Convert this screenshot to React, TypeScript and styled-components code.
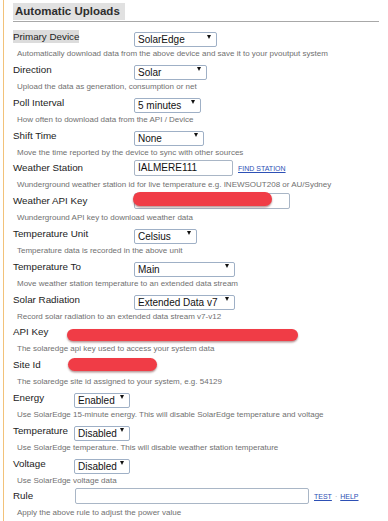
import React from "react";
import styled, { createGlobalStyle } from "styled-components";

const Global = createGlobalStyle`
  html, body { margin: 0; padding: 0; background: #fff; }
  body { font-family: "Liberation Sans", Arial, sans-serif; }
`;

const Panel = styled.div`
  margin-left: 3px;
  border-left: 1px solid #f2c27a;
  padding: 3px 9px 0 9px;
  min-height: 521px;
  box-sizing: border-box;
`;

const Header = styled.div`
  display: flex;
  border-bottom: 1px solid #a8a8a8;
  padding-bottom: 1px;
`;

const Title = styled.h2`
  margin: 0;
  font-size: 11.5px;
  font-weight: bold;
  line-height: 17px;
  background: #e1e1e1;
  color: #2e2e2e;
  padding: 0 5px 0 2px;
`;

const Form = styled.div`
  margin-top: 6.7px;
`;

const Row = styled.div<{ $labelWidth: number }>`
  display: grid;
  grid-template-columns: ${(p) => p.$labelWidth}px 1fr;
  align-items: center;
  height: 16px;
`;

const Label = styled.span<{ $highlight?: boolean }>`
  justify-self: start;
  font-size: 9.8px;
  line-height: 13px;
  color: #1c1c1c;
  white-space: nowrap;
  background: ${(p) => (p.$highlight ? "#dcdcdc" : "transparent")};
`;

const Field = styled.div`
  display: flex;
  align-items: center;
  gap: 5px;
`;

const Desc = styled.div`
  font-size: 8px;
  line-height: 10px;
  color: #707070;
  padding-left: 4px;
  margin-top: 4.5px;
  margin-bottom: 2.3px;
  white-space: nowrap;
`;

const SelectWrap = styled.div<{ $w: number }>`
  position: relative;
  width: ${(p) => p.$w}px;
  height: 15px;
`;

const Select = styled.select`
  appearance: none;
  -webkit-appearance: none;
  width: 100%;
  height: 100%;
  box-sizing: border-box;
  border: 1px solid #9fb0c6;
  border-radius: 2px;
  background: #fff;
  font-family: "Liberation Sans", Arial, sans-serif;
  font-size: 10px;
  color: #111;
  padding: 0 0 0 3px;
  margin: 0;
  outline: none;
`;

const Arrow = styled.span`
  position: absolute;
  right: 6px;
  top: 50%;
  margin-top: -2px;
  width: 0;
  height: 0;
  border-left: 2.5px solid transparent;
  border-right: 2.5px solid transparent;
  border-top: 4px solid #111;
  pointer-events: none;
`;

const InputWrap = styled.div`
  position: relative;
  display: flex;
`;

const TextInput = styled.input<{ $w: number }>`
  width: ${(p) => p.$w}px;
  height: 16px;
  box-sizing: border-box;
  border: 1px solid #a9b6c6;
  border-radius: 2px;
  font-family: "Liberation Sans", Arial, sans-serif;
  font-size: 10px;
  color: #111;
  padding: 0 3px;
  margin: 0;
  outline: none;
`;

const Redaction = styled.span<{ $w: number; $h: number; $dy?: number; $overlay?: boolean }>`
  display: block;
  width: ${(p) => p.$w}px;
  height: ${(p) => p.$h}px;
  border-radius: ${(p) => p.$h / 2}px;
  background: #f03c46;
  box-shadow: 0 1.5px 2px rgba(90, 20, 20, 0.45);
  transform: translateY(${(p) => p.$dy ?? 0}px);
  ${(p) => (p.$overlay ? "position: absolute; left: -1px; top: -1px;" : "")}
`;

const Links = styled.div`
  display: flex;
  align-items: center;
  gap: 3px;
  font-size: 7px;
  padding-top: 2px;
`;

const Link = styled.a`
  color: #2d50b5;
  text-decoration: underline;
  cursor: pointer;
`;

const Sep = styled.span`
  color: #999;
`;

type Opt = { value: string; w: number };

function Dropdown({ value, w }: Opt) {
  return (
    <SelectWrap $w={w}>
      <Select defaultValue={value}>
        <option value={value}>{value}</option>
      </Select>
      <Arrow />
    </SelectWrap>
  );
}

function Setting({
  label,
  desc,
  labelWidth,
  highlight,
  children,
}: {
  label: string;
  desc: string;
  labelWidth: number;
  highlight?: boolean;
  children: React.ReactNode;
}) {
  return (
    <>
      <Row $labelWidth={labelWidth}>
        <Label $highlight={highlight}>{label}</Label>
        <Field>{children}</Field>
      </Row>
      <Desc>{desc}</Desc>
    </>
  );
}

export default function App() {
  const top = 121;
  return (
    <>
      <Global />
      <Panel>
        <Header>
          <Title>Automatic Uploads</Title>
        </Header>
        <Form>
          <Setting
            label="Primary Device"
            highlight
            labelWidth={top}
            desc="Automatically download data from the above device and save it to your pvoutput system"
          >
            <Dropdown value="SolarEdge" w={83} />
          </Setting>
          <Setting label="Direction" labelWidth={top} desc="Upload the data as generation, consumption or net">
            <Dropdown value="Solar" w={73} />
          </Setting>
          <Setting label="Poll Interval" labelWidth={top} desc="How often to download data from the API / Device">
            <Dropdown value="5 minutes" w={67} />
          </Setting>
          <Setting label="Shift Time" labelWidth={top} desc="Move the time reported by the device to sync with other sources">
            <Dropdown value="None" w={70} />
          </Setting>
          <Setting
            label="Weather Station"
            labelWidth={top}
            desc="Wunderground weather station id for live temperature e.g. INEWSOUT208 or AU/Sydney"
          >
            <TextInput $w={99} defaultValue="IALMERE111" />
            <Links>
              <Link>FIND STATION</Link>
            </Links>
          </Setting>
          <Setting label="Weather API Key" labelWidth={top} desc="Wunderground API key to download weather data">
            <InputWrap>
              <TextInput $w={156} defaultValue="" />
              <Redaction $w={139} $h={14} $overlay />
            </InputWrap>
          </Setting>
          <Setting label="Temperature Unit" labelWidth={top} desc="Temperature data is recorded in the above unit">
            <Dropdown value="Celsius" w={63} />
          </Setting>
          <Setting
            label="Temperature To"
            labelWidth={top}
            desc="Move weather station temperature to an extended data stream"
          >
            <Dropdown value="Main" w={101} />
          </Setting>
          <Setting
            label="Solar Radiation"
            labelWidth={top}
            desc="Record solar radiation to an extended data stream v7-v12"
          >
            <Dropdown value="Extended Data v7" w={101} />
          </Setting>
          <Setting label="API Key" labelWidth={54} desc="The solaredge api key used to access your system data">
            <Redaction $w={231} $h={12} $dy={3} />
          </Setting>
          <Setting label="Site Id" labelWidth={55} desc="The solaredge site id assigned to your system, e.g. 54129">
            <Redaction $w={89} $h={13} />
          </Setting>
          <Setting
            label="Energy"
            labelWidth={61}
            desc="Use SolarEdge 15-minute energy. This will disable SolarEdge temperature and voltage"
          >
            <Dropdown value="Enabled" w={56} />
          </Setting>
          <Setting
            label="Temperature"
            labelWidth={61}
            desc="Use SolarEdge temperature. This will disable weather station temperature"
          >
            <Dropdown value="Disabled" w={56} />
          </Setting>
          <Setting label="Voltage" labelWidth={61} desc="Use SolarEdge voltage data">
            <Dropdown value="Disabled" w={56} />
          </Setting>
          <Setting label="Rule" labelWidth={62} desc="Apply the above rule to adjust the power value">
            <TextInput $w={234} defaultValue="" />
            <Links>
              <Link>TEST</Link>
              <Sep>·</Sep>
              <Link>HELP</Link>
            </Links>
          </Setting>
        </Form>
      </Panel>
    </>
  );
}
